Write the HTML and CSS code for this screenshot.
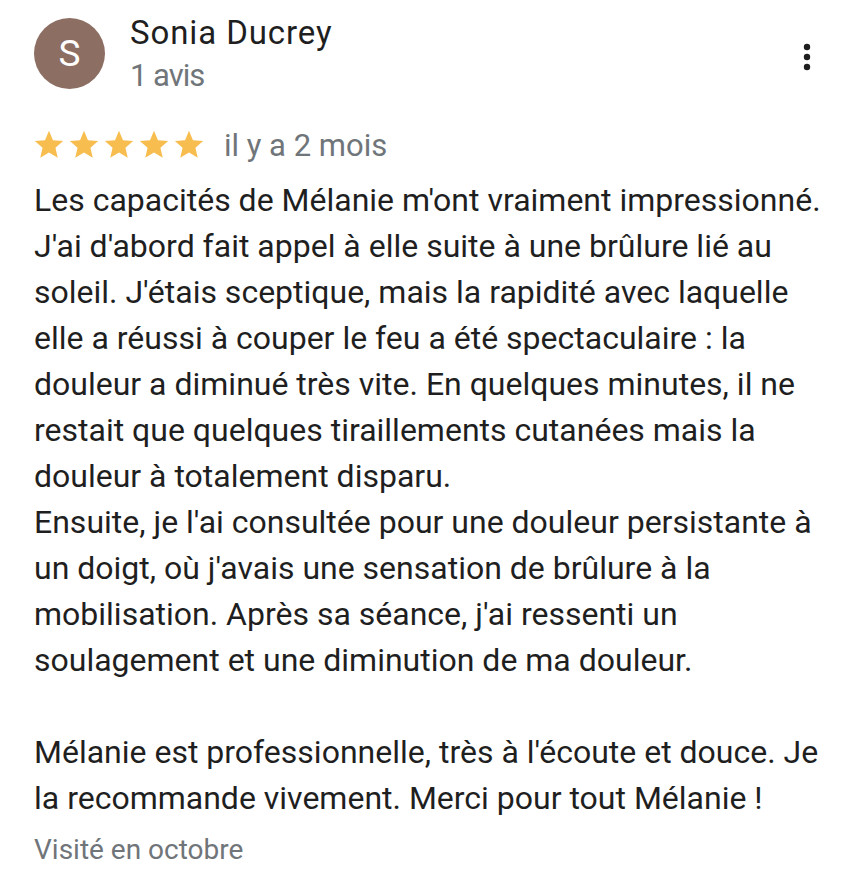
FILE: index.html
```html
<!DOCTYPE html>
<html lang="fr">
<head>
<meta charset="utf-8">
<link rel="stylesheet" href="styles.css">
</head>
<body>
<div class="review">
  <div class="header">
    <div class="avatar">S</div>
    <div class="author">
      <div class="name">Sonia Ducrey</div>
      <div class="count">1 avis</div>
    </div>
    <div class="menu" aria-label="Plus d'options">
      <svg width="8" height="28" viewBox="0 0 8 28"><circle cx="4" cy="4" r="3.2"/><circle cx="4" cy="14" r="3.2"/><circle cx="4" cy="24" r="3.2"/></svg>
    </div>
  </div>
  <div class="rating">
    <div class="stars">
      <svg class="star" viewBox="0 0 24 24"><path d="M12 17.27L18.18 21l-1.64-7.03L22 9.24l-7.19-.61L12 2 9.19 8.63 2 9.24l5.46 4.73L5.82 21z"/></svg>
      <svg class="star" viewBox="0 0 24 24"><path d="M12 17.27L18.18 21l-1.64-7.03L22 9.24l-7.19-.61L12 2 9.19 8.63 2 9.24l5.46 4.73L5.82 21z"/></svg>
      <svg class="star" viewBox="0 0 24 24"><path d="M12 17.27L18.18 21l-1.64-7.03L22 9.24l-7.19-.61L12 2 9.19 8.63 2 9.24l5.46 4.73L5.82 21z"/></svg>
      <svg class="star" viewBox="0 0 24 24"><path d="M12 17.27L18.18 21l-1.64-7.03L22 9.24l-7.19-.61L12 2 9.19 8.63 2 9.24l5.46 4.73L5.82 21z"/></svg>
      <svg class="star" viewBox="0 0 24 24"><path d="M12 17.27L18.18 21l-1.64-7.03L22 9.24l-7.19-.61L12 2 9.19 8.63 2 9.24l5.46 4.73L5.82 21z"/></svg>
    </div>
    <span class="date">il y a 2 mois</span>
  </div>
  <div class="text">Les capacités de Mélanie m'ont vraiment impressionné.<br>J'ai d'abord fait appel à elle suite à une brûlure lié au<br>soleil. J'étais sceptique, mais la rapidité avec laquelle<br>elle a réussi à couper le feu a été spectaculaire : la<br>douleur a diminué très vite. En quelques minutes, il ne<br>restait que quelques tiraillements cutanées mais la<br>douleur à totalement disparu.<br>Ensuite, je l'ai consultée pour une douleur persistante à<br>un doigt, où j'avais une sensation de brûlure à la<br>mobilisation. Après sa séance, j'ai ressenti un<br>soulagement et une diminution de ma douleur.<br><br>Mélanie est professionnelle, très à l'écoute et douce. Je<br>la recommande vivement. Merci pour tout Mélanie !</div>
  <div class="visited">Visité en octobre</div>
</div>
</body>
</html>
```
FILE: styles.css
```css
* { box-sizing: border-box; }
body {
  margin: 0;
  background: #fff;
  font-family: Roboto, "Noto Sans", Arial, sans-serif;
  color: #1f1f1f;
}
.review {
  padding: 13px 20px 0 34px;
}
.header {
  display: flex;
  align-items: flex-start;
}
.avatar {
  width: 71px;
  height: 71px;
  margin-top: 5px;
  border-radius: 50%;
  background: #8d6e63;
  color: #fff;
  font-size: 37px;
  display: flex;
  align-items: center;
  justify-content: center;
  flex: none;
}
.author {
  margin-left: 25px;
  flex: 1;
}
.name {
  font-size: 33px;
  line-height: 40px;
  letter-spacing: 0.9px;
  color: #1f1f1f;
}
.count {
  font-size: 31px;
  line-height: 40px;
  letter-spacing: -1px;
  margin-top: 3px;
  color: #70757a;
}
.menu {
  margin-top: 30px;
  margin-right: 27px;
  fill: #1f1f1f;
  display: flex;
}
.rating {
  display: flex;
  align-items: flex-start;
  margin-top: 30px;
  margin-left: -2px;
}
.stars {
  display: flex;
  gap: 1px;
  margin-top: 2px;
}
.star {
  width: 34px;
  height: 34px;
  fill: #f8bd4f;
}
.date {
  margin-left: 18px;
  font-size: 31px;
  line-height: 40px;
  color: #70757a;
}
.text {
  margin-top: 11px;
  font-size: 32px;
  line-height: 46px;
}
.visited {
  font-size: 28px;
  line-height: 40px;
  color: #70757a;
  margin-top: 9px;
}
```
